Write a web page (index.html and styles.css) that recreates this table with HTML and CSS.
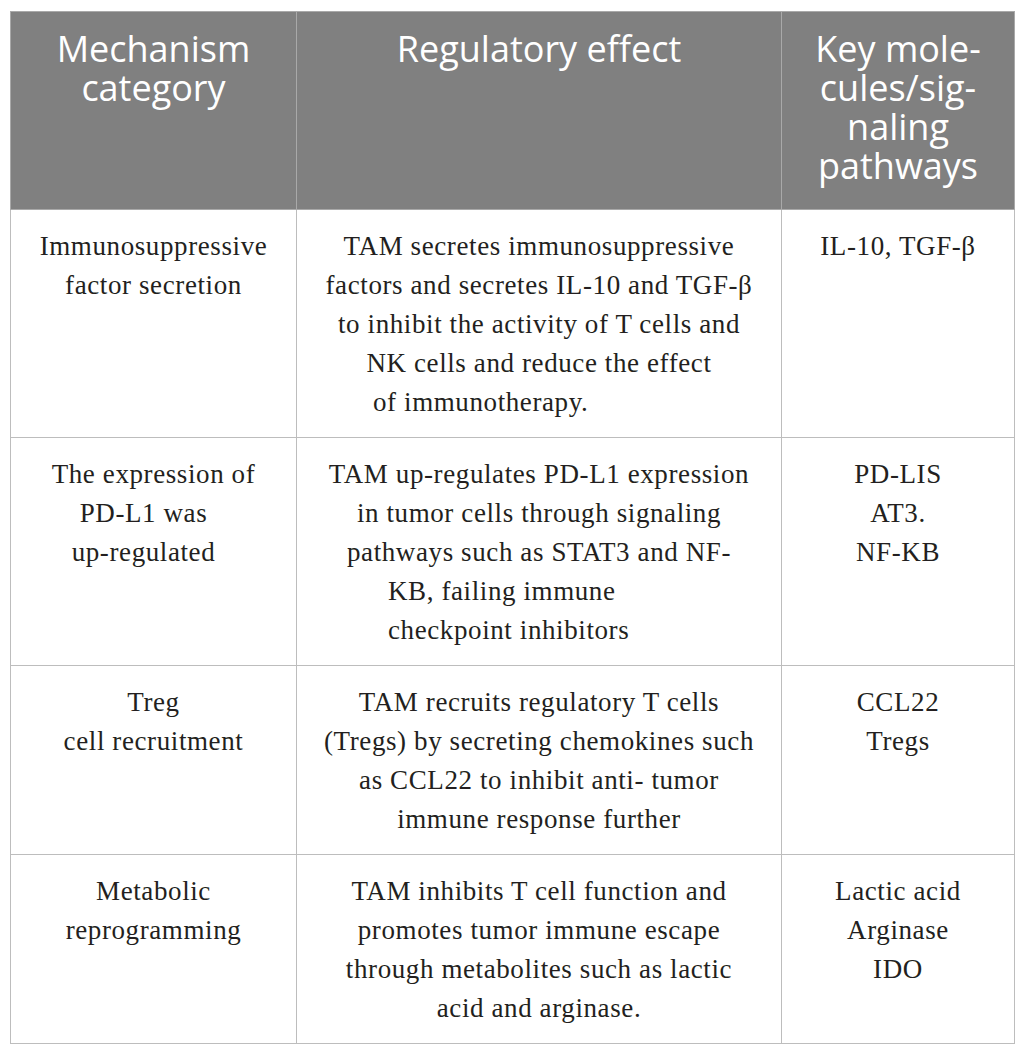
FILE: index.html
```html
<!DOCTYPE html>
<html lang="en">
<head>
    <meta charset="UTF-8">
    <title>TAM mechanisms table</title>
    <link rel="stylesheet" href="styles.css">
</head>
<body>

<table class="mech-table">
    <colgroup>
        <col class="col-cat">
        <col class="col-effect">
        <col class="col-keys">
    </colgroup>
    <thead>
        <tr>
            <th>Mechanism<br>category</th>
            <th>Regulatory effect</th>
            <th>Key mole-<br>cules/sig-<br>naling<br>pathways</th>
        </tr>
    </thead>
    <tbody>
        <tr>
            <td>Immunosuppressive<br>factor secretion</td>
            <td>TAM secretes immunosuppressive<br>factors and secretes IL-10 and TGF-β<br>to inhibit the activity of T cells and<br>NK cells and reduce the effect<br><span class="ragged ragged-a">of immunotherapy.</span></td>
            <td>IL-10, TGF-β</td>
        </tr>
        <tr>
            <td>The expression of<br><span class="nudge">PD-L1 was</span><br><span class="nudge">up-regulated</span></td>
            <td>TAM up-regulates PD-L1 expression<br>in tumor cells through signaling<br>pathways such as STAT3 and NF-<br><span class="ragged ragged-b">KB, failing immune</span><span class="ragged ragged-b">checkpoint inhibitors</span></td>
            <td>PD-LIS<br>AT3.<br>NF-KB</td>
        </tr>
        <tr>
            <td>Treg<br>cell recruitment</td>
            <td>TAM recruits regulatory T cells<br>(Tregs) by secreting chemokines such<br>as CCL22 to inhibit anti- tumor<br>immune response further</td>
            <td>CCL22<br>Tregs</td>
        </tr>
        <tr>
            <td>Metabolic<br>reprogramming</td>
            <td>TAM inhibits T cell function and<br>promotes tumor immune escape<br>through metabolites such as lactic<br>acid and arginase.</td>
            <td>Lactic acid<br>Arginase<br>IDO</td>
        </tr>
    </tbody>
</table>

</body>
</html>
```

FILE: styles.css
```css
body {
    margin: 11px 10px;
    background-color: #fff;
    color: #231f20;
}
.mech-table {
    width: 1004px;
    border-collapse: collapse;
    table-layout: fixed;
    border: 1px solid #a9a9a9;
}
.col-cat {
    width: 286px;
}
.col-effect {
    width: 485px;
}
.col-keys {
    width: 233px;
}
.mech-table th {
    background-color: #808080;
    color: #fff;
    font-family: 'Open Sans', 'Liberation Sans', sans-serif;
    font-weight: 400;
    font-size: 36px;
    line-height: 39px;
    padding: 17px 10px 24px;
    text-align: center;
    vertical-align: top;
    border: 1px solid #a9a9a9;
    white-space: nowrap;
}
.mech-table td {
    font-family: 'Liberation Serif', 'Times New Roman', serif;
    font-size: 27px;
    letter-spacing: 0.6px;
    line-height: 39px;
    padding: 17px 10px 15px;
    text-align: center;
    vertical-align: top;
    border: 1px solid #bdbdbd;
    white-space: nowrap;
}
.ragged {
    display: block;
    text-align: left;
}
.ragged-a {
    padding-left: 66px;
}
.ragged-b {
    padding-left: 81px;
}
.nudge {
    display: inline-block;
    padding-right: 20px;
}
```
